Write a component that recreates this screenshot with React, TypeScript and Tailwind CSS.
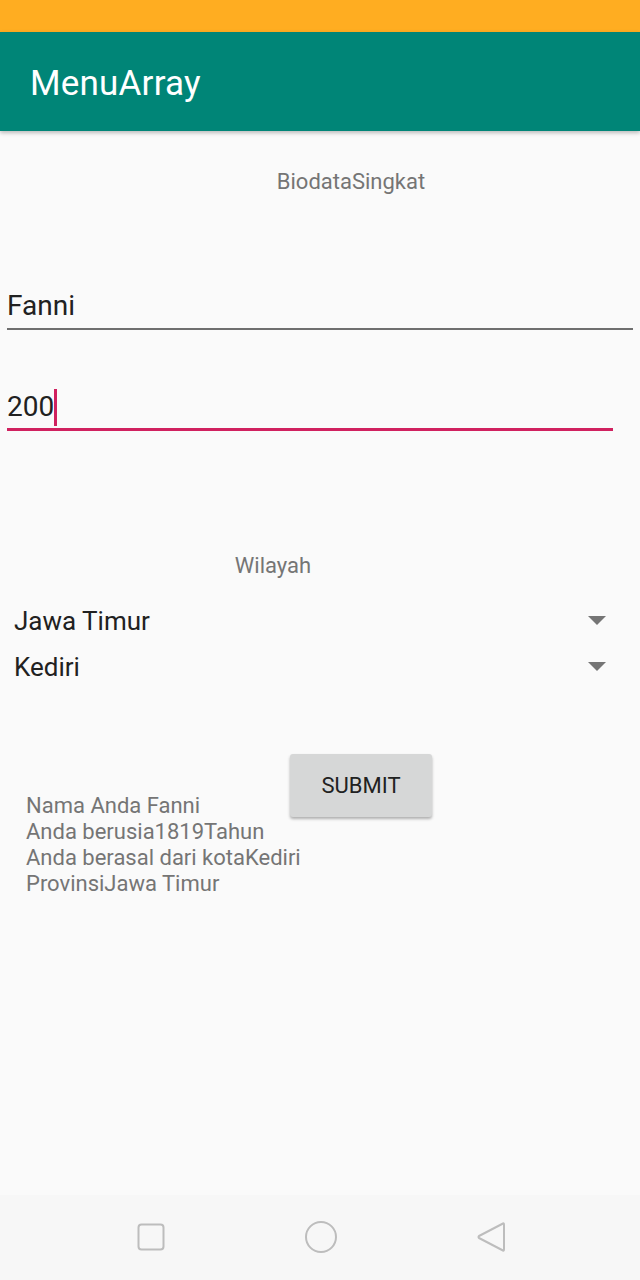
import React from 'react';

const font = { fontFamily: 'Roboto, "Noto Sans", sans-serif' };

const Arrow: React.FC = () => (
  <svg width="18" height="10" viewBox="0 0 18 10" className="mr-[34px]">
    <path d="M0 0 L18 0 L9 9 Z" fill="#757575" />
  </svg>
);

const App: React.FC = () => {
  return (
    <div className="w-[640px] h-[1280px] flex flex-col bg-[#fafafa]" style={font}>
      <div className="h-[32px] bg-[#ffad21]" />
      <div className="h-[99px] bg-[#008577] flex items-center pl-[30px] pt-[4px] shadow-[0_2px_4px_rgba(0,0,0,0.25)] z-10">
        <span className="text-white text-[35px] leading-none tracking-[0.2px]">MenuArray</span>
      </div>

      <div className="flex-1 flex flex-col">
        <div className="mt-[37px] pl-[62px] text-center text-[22px] leading-[28px] text-[#757575]">
          BiodataSingkat
        </div>

        <div className="mt-[92px] mx-[7px]">
          <div className="text-[28px] leading-[36px] text-[#212121]">Fanni</div>
          <div className="mt-[4px] h-[2px] bg-[#6f6f6f]" />
        </div>

        <div className="mt-[59px] ml-[7px] mr-[27px]">
          <div className="flex items-center h-[36px]">
            <span className="text-[28px] leading-[36px] text-[#212121]">200</span>
            <span className="w-[3px] h-[37px] bg-[#d0215f]" />
          </div>
          <div className="mt-[3px] h-[3px] bg-[#d0215f]" />
        </div>

        <div className="mt-[121px] pr-[94px] text-center text-[22px] leading-[28px] text-[#757575]">
          Wilayah
        </div>

        <div className="mt-[25px] pl-[14px] flex items-center justify-between h-[32px]">
          <span className="text-[26px] text-[#212121]">Jawa Timur</span>
          <Arrow />
        </div>
        <div className="mt-[14px] pl-[14px] flex items-center justify-between h-[32px]">
          <span className="text-[26px] text-[#212121]">Kediri</span>
          <Arrow />
        </div>

        <div className="mt-[71px] grid">
          <div className="col-start-1 row-start-1 mt-[39px] ml-[26px] text-[22px] leading-[26px] text-[#757575]">
            <div>Nama Anda Fanni</div>
            <div>Anda berusia1819Tahun</div>
            <div>Anda berasal dari kotaKediri</div>
            <div>ProvinsiJawa Timur</div>
          </div>
          <div className="col-start-1 row-start-1 ml-[290px] self-start">
            <button className="w-[142px] h-[63px] bg-[#d6d7d7] rounded-[3px] shadow-[0_2px_3px_rgba(0,0,0,0.3)] text-[22px] font-normal text-[#212121]">
              SUBMIT
            </button>
          </div>
        </div>
      </div>

      <div className="h-[85px] bg-[#f7f7f7] flex items-center justify-between pl-[137px] pr-[134px] pb-[1px]">
        <svg width="28" height="28" viewBox="0 0 28 28">
          <rect x="1.5" y="1.5" width="25" height="25" rx="3" fill="none" stroke="#bdbdbd" strokeWidth="2" />
        </svg>
        <svg width="34" height="34" viewBox="0 0 34 34">
          <circle cx="17" cy="17" r="15" fill="none" stroke="#bdbdbd" strokeWidth="2" />
        </svg>
        <svg width="30" height="32" viewBox="0 0 30 32">
          <path d="M27 2.5 Q28 2 28 4 L28 28 Q28 30 27 29.5 L3 17 Q2 16 3 15 Z" fill="none" stroke="#bdbdbd" strokeWidth="2" strokeLinejoin="round" />
        </svg>
      </div>
    </div>
  );
};

export default App;
